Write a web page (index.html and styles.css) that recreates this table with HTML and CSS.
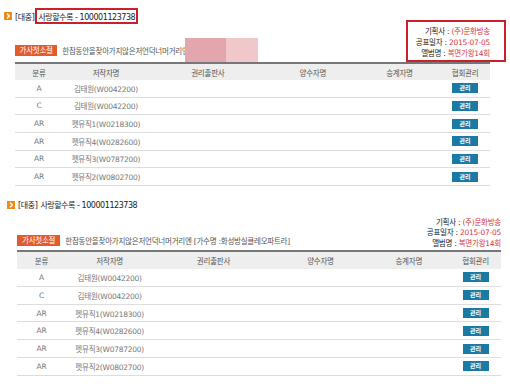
FILE: index.html
```html
<!DOCTYPE html>
<html lang="ko">
<head>
<meta charset="utf-8">
<title>사랑할수록</title>
<link rel="stylesheet" href="styles.css">
</head>
<body>
<section class="block block--marked">
  <h2 class="title">
    <span class="bullet"><svg viewBox="0 0 8 8" width="8" height="8"><rect width="8" height="8" fill="#ee8a1c"/><polyline points="3,1.8 5.4,4 3,6.2" fill="none" stroke="#fff" stroke-width="1.4"/></svg></span>
    <span class="cat">[대중]</span><span class="name mark">사랑할수록 - 100001123738</span>
  </h2>
  <div class="meta">
    <div class="lyric">
      <span class="badge">가사첫소절</span>
      <span class="lyric-text">한참동안을찾아가지않은저언덕너머거리엔</span>
      <span class="redact"></span>
    </div>
    <div class="info mark">
      <div><span class="label">기획사 : </span><span class="value">(주)문화방송</span></div>
      <div><span class="label">공표일자 : </span><span class="value">2015-07-05</span></div>
      <div><span class="label">앨범명 : </span><span class="value">복면가왕14회</span></div>
    </div>
  </div>
  <table class="list">
    <colgroup><col class="c1"><col class="c2"><col class="c3"><col class="c4"><col class="c5"><col class="c6"></colgroup>
    <thead><tr><th>분류</th><th>저작자명</th><th>권리출판사</th><th>양수자명</th><th>승계자명</th><th>협회관리</th></tr></thead>
    <tbody>
      <tr><td>A</td><td>김태원(W0042200)</td><td></td><td></td><td></td><td><span class="btn">관리</span></td></tr>
      <tr><td>C</td><td>김태원(W0042200)</td><td></td><td></td><td></td><td><span class="btn">관리</span></td></tr>
      <tr><td>AR</td><td>펫뮤직1(W0218300)</td><td></td><td></td><td></td><td><span class="btn">관리</span></td></tr>
      <tr><td>AR</td><td>펫뮤직4(W0282600)</td><td></td><td></td><td></td><td><span class="btn">관리</span></td></tr>
      <tr><td>AR</td><td>펫뮤직3(W0787200)</td><td></td><td></td><td></td><td><span class="btn">관리</span></td></tr>
      <tr><td>AR</td><td>펫뮤직2(W0802700)</td><td></td><td></td><td></td><td><span class="btn">관리</span></td></tr>
    </tbody>
  </table>
</section>

<section class="block block--plain">
  <h2 class="title">
    <span class="bullet"><svg viewBox="0 0 8 8" width="8" height="8"><rect width="8" height="8" fill="#ee8a1c"/><polyline points="3,1.8 5.4,4 3,6.2" fill="none" stroke="#fff" stroke-width="1.4"/></svg></span>
    <span class="cat">[대중]</span><span class="name">사랑할수록 - 100001123738</span>
  </h2>
  <div class="meta">
    <div class="lyric">
      <span class="badge">가사첫소절</span>
      <span class="lyric-text">한참동안을찾아가지않은저언덕너머거리엔 [가수명 :화성방실클레오파트라]</span>
    </div>
    <div class="info">
      <div><span class="label">기획사 : </span><span class="value">(주)문화방송</span></div>
      <div><span class="label">공표일자 : </span><span class="value">2015-07-05</span></div>
      <div><span class="label">앨범명 : </span><span class="value">복면가왕14회</span></div>
    </div>
  </div>
  <table class="list">
    <colgroup><col class="c1"><col class="c2"><col class="c3"><col class="c4"><col class="c5"><col class="c6"></colgroup>
    <thead><tr><th>분류</th><th>저작자명</th><th>권리출판사</th><th>양수자명</th><th>승계자명</th><th>협회관리</th></tr></thead>
    <tbody>
      <tr><td>A</td><td>김태원(W0042200)</td><td></td><td></td><td></td><td><span class="btn">관리</span></td></tr>
      <tr><td>C</td><td>김태원(W0042200)</td><td></td><td></td><td></td><td><span class="btn">관리</span></td></tr>
      <tr><td>AR</td><td>펫뮤직1(W0218300)</td><td></td><td></td><td></td><td><span class="btn">관리</span></td></tr>
      <tr><td>AR</td><td>펫뮤직4(W0282600)</td><td></td><td></td><td></td><td><span class="btn">관리</span></td></tr>
      <tr><td>AR</td><td>펫뮤직3(W0787200)</td><td></td><td></td><td></td><td><span class="btn">관리</span></td></tr>
      <tr><td>AR</td><td>펫뮤직2(W0802700)</td><td></td><td></td><td></td><td><span class="btn">관리</span></td></tr>
    </tbody>
  </table>
</section>
</body>
</html>
```
FILE: styles.css
```css
* { box-sizing: border-box; }
body {
  margin: 0;
  background: #fff;
  font-family: "DejaVu Sans", "Noto Sans CJK KR", sans-serif;
  font-size: 7.5px;
  letter-spacing: -0.25px;
  color: #666;
}
.block--marked { padding-top: 8px; }
.block--plain { margin-top: 12px; }

.title {
  margin: 0;
  display: flex;
  align-items: center;
  height: 16px;
  font-size: 8px;
  font-weight: normal;
  color: #222;
  white-space: nowrap;
}
.block--marked .title { padding-left: 4px; }
.block--plain .title { padding-left: 7px; height: 14px; }
.bullet { display: flex; width: 8px; height: 8px; margin-right: 3px; }
.cat { letter-spacing: -0.4px; }
.name { letter-spacing: -0.45px; }
.block--plain .name { margin-left: 3px; }
.mark { border: 2px solid #cc1f2c; }
.title .mark {
  height: 16px;
  display: flex;
  align-items: center;
  margin-left: 1px;
  padding: 0 1px 0 1px;
}

.meta {
  display: flex;
  justify-content: space-between;
  align-items: flex-end;
  white-space: nowrap;
}
.block--marked .meta { margin-top: -4px; height: 42px; padding: 0 4px 0 15px; }
.block--plain .meta { margin-top: 4px; height: 34px; padding: 0 9px 0 17px; }

.lyric { display: flex; align-items: center; color: #555; }
.block--marked .lyric { height: 24px; }
.block--plain .lyric { height: 11px; margin-bottom: 4px; }
.badge {
  height: 11px;
  line-height: 11px;
  padding: 0 4.5px;
  margin-right: 5px;
  background: #e35a2b;
  color: #fff;
}
.block--plain .badge { padding: 0 5px; }
.redact {
  width: 73px;
  height: 24px;
  margin-left: -4px;
  background: linear-gradient(to right, #e4a6ad 0, #e4a6ad 56%, #f0c8cc 56%, #f0c8cc 100%);
}

.info { text-align: right; color: #222; }
.info.mark { height: 42px; padding: 3.5px 14px 0 8px; line-height: 11.4px; }
.block--plain .info { line-height: 10.8px; }
.info .value { color: #d8353d; }

.list {
  border-collapse: separate;
  border-spacing: 0;
  table-layout: fixed;
  border-top: 2px solid #777;
}
.block--marked .list { width: 475px; margin-left: 15px; }
.block--plain .list { width: 484px; margin-left: 17px; }
.c1 { width: 10.1%; }
.c2 { width: 18.1%; }
.c3 { width: 24.8%; }
.c4 { width: 19.4%; }
.c5 { width: 17.1%; }
.c6 { width: 10.5%; }
.list th {
  padding: 0;
  background: #eeeeee;
  color: #555;
  font-weight: normal;
  text-align: center;
}
.block--marked .list th { height: 16px; }
.block--plain .list th { height: 17px; }
.list td {
  padding: 0;
  text-align: center;
  color: #777;
  border-bottom: 1.5px solid #dddddd;
  white-space: nowrap;
}
.block--marked .list td { height: 17.67px; }
.block--plain .list td { height: 17.83px; }
.btn {
  display: inline-block;
  width: 26px;
  height: 10px;
  line-height: 10px;
  letter-spacing: 0;
  vertical-align: middle;
  background: #1b7aa3;
  color: #fff;
  font-size: 6px;
  font-weight: bold;
}
```
